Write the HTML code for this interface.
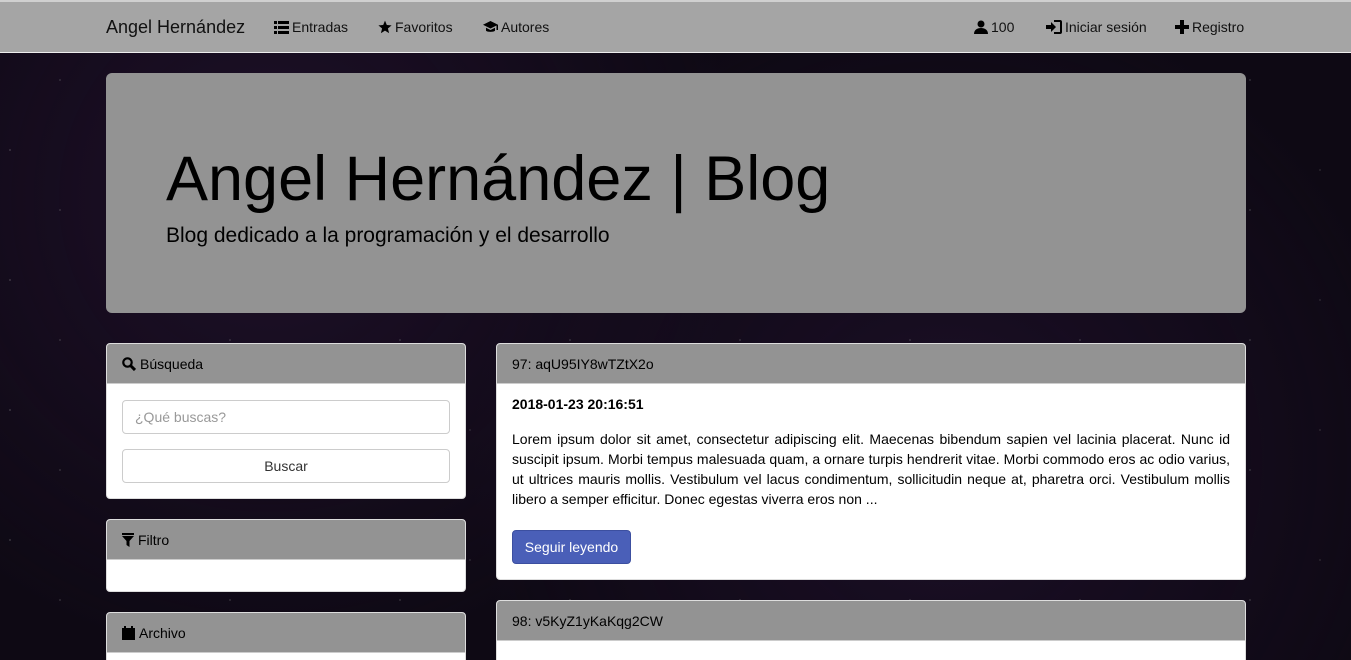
<!DOCTYPE html>
<html><head><meta charset="utf-8"><style>
*{box-sizing:border-box;margin:0;padding:0}
html,body{width:1351px;height:660px;overflow:hidden}
body{font-family:"Liberation Sans",sans-serif;font-size:14px;color:#000;
background:#0e0914;background-image:radial-gradient(circle at 20% 30%,rgba(45,22,60,.5),transparent 40%),radial-gradient(circle at 70% 70%,rgba(40,20,55,.5),transparent 45%);position:relative}
.stars{position:absolute;inset:0;background-image:radial-gradient(1px 1px at 10px 20px,#ccc,transparent),radial-gradient(1px 1px at 60px 80px,#aaa,transparent),radial-gradient(1px 1px at 130px 40px,#888,transparent);background-size:170px 130px;opacity:.6}
.nav{position:absolute;left:0;top:0;width:1351px;height:53px;background:#a5a5a5;border-top:2px solid #d0d0d0;border-bottom:1px solid #eee}
.nav span{position:absolute;top:17px;font-size:14px;color:#111;display:flex;align-items:center;gap:3px}
.nav svg,.ph svg{fill:#000}
.brand{font-size:18px!important;top:15px!important;left:106px}
.jumbo{position:absolute;left:106px;top:73px;width:1140px;height:240px;background:#939393;border-radius:6px}
.jumbo h1{position:absolute;left:60px;top:70px;font-size:63px;font-weight:normal;color:#000}
.jumbo p{position:absolute;left:60px;top:151px;font-size:21px}
.panel{position:absolute;background:#fff;border:1px solid #ddd;border-radius:4px;overflow:hidden}
.ph{background:#939393;height:40px;padding:12px 15px;font-size:14px;border-bottom:1px solid #ccc;display:flex;align-items:center;gap:4px;padding-top:0;padding-bottom:0}
.inp{position:absolute;left:15px;width:328px;height:34px;border:1px solid #ccc;border-radius:4px;font-size:14px;padding:8px 12px;color:#999}
.btn{text-align:center;color:#333}
</style></head><body>
<div class="stars"></div>
<div class="nav">
<span class="brand">Angel Hernández</span>
<span style="left:274px"><svg width="15" height="13" viewBox="0 0 15 13"><rect x="0" y="0" width="3" height="3"/><rect x="4" y="0" width="11" height="3"/><rect x="0" y="5" width="3" height="3"/><rect x="4" y="5" width="11" height="3"/><rect x="0" y="10" width="3" height="3"/><rect x="4" y="10" width="11" height="3"/></svg>Entradas</span>
<span style="left:378px"><svg width="14" height="14" viewBox="0 0 24 24"><path d="M12 1l3.1 7.6 8.2.6-6.3 5.3 2 8L12 18.2 5 22.5l2-8L.7 9.2l8.2-.6z"/></svg> Favoritos</span>
<span style="left:483px"><svg width="15" height="12" viewBox="0 0 20 16"><path d="M10 0L0 5l10 5 8-4v6h2V5zM4 9v4c2 2 10 2 12 0V9l-6 3z"/></svg> Autores</span>
<span style="left:974px"><svg width="14" height="14" viewBox="0 0 14 14"><circle cx="7" cy="4" r="3.5"/><path d="M0 14c0-4 3-6 7-6s7 2 7 6z"/></svg>100</span>
<span style="left:1046px"><svg width="16" height="14" viewBox="0 0 16 14"><path d="M0 5h5V2l5 5-5 5V9H0z"/><path d="M8 0h6a2 2 0 012 2v10a2 2 0 01-2 2H8v-2h6V2H8z"/></svg>Iniciar sesión</span>
<span style="left:1175px"><svg width="14" height="14" viewBox="0 0 14 14"><rect x="5" y="0" width="4" height="14"/><rect x="0" y="5" width="14" height="4"/></svg> Registro</span>
</div>
<div class="jumbo"><h1>Angel Hernández | Blog</h1><p>Blog dedicado a la programación y el desarrollo</p></div>
<div class="panel" style="left:106px;top:343px;width:360px;height:156px">
<div class="ph"><svg width="14" height="14" viewBox="0 0 14 14"><circle cx="5.5" cy="5.5" r="4.2" fill="none" stroke="#000" stroke-width="2.2"/><path d="M8.5 8.5l4.5 4.5" stroke="#000" stroke-width="3"/></svg>Búsqueda</div>
<div class="inp" style="top:56px">¿Qué buscas?</div>
<div class="inp btn" style="top:105px">Buscar</div>
</div>
<div class="panel" style="left:106px;top:519px;width:360px;height:73px"><div class="ph"><svg width="12" height="14" viewBox="0 0 12 14"><rect x="0" y="0" width="12" height="2"/><path d="M0 3h12L7.5 8v6l-3-2V8z"/></svg> Filtro</div></div>
<div class="panel" style="left:106px;top:612px;width:360px;height:60px"><div class="ph"><svg width="13" height="14" viewBox="0 0 13 14"><rect x="0" y="2" width="13" height="12"/><rect x="2" y="0" width="2" height="3"/><rect x="9" y="0" width="2" height="3"/></svg> Archivo</div></div>
<div class="panel" style="left:496px;top:343px;width:750px;height:237px">
<div class="ph">97: aqU95IY8wTZtX2o</div>
<div style="padding:12px 15px 0"><b>2018-01-23 20:16:51</b>
<p style="margin-top:17px;line-height:20px;text-align:justify">Lorem ipsum dolor sit amet, consectetur adipiscing elit. Maecenas bibendum sapien vel lacinia placerat. Nunc id suscipit ipsum. Morbi tempus malesuada quam, a ornare turpis hendrerit vitae. Morbi commodo eros ac odio varius, ut ultrices mauris mollis. Vestibulum vel lacus condimentum, sollicitudin neque at, pharetra orci. Vestibulum mollis libero a semper efficitur. Donec egestas viverra eros non ...</p>
<div style="margin-top:21px;width:119px;height:34px;background:#4a5fb8;border:1px solid #3c4fa0;border-radius:4px;color:#fff;text-align:center;line-height:32px">Seguir leyendo</div></div>
</div>
<div class="panel" style="left:496px;top:600px;width:750px;height:80px"><div class="ph">98: v5KyZ1yKaKqg2CW</div></div>
</body></html>
